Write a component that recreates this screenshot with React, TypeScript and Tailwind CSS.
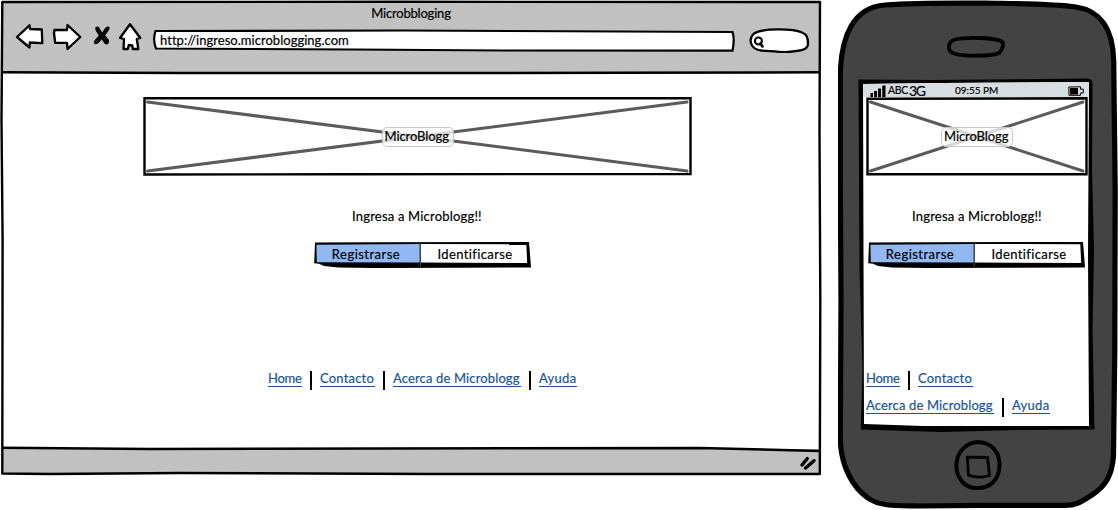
import React from "react";

const textBase = "font-['Lato',sans-serif] whitespace-nowrap text-black [-webkit-text-stroke:0.2px_black]";

function NavIcons() {
  return (
    <svg className="block shrink-0" width="130" height="32" viewBox="14 22 130 32" fill="white" stroke="black" strokeWidth="2.3" strokeLinejoin="round" strokeLinecap="round">
      <path d="M17 37 L29.5 25.3 L30.2 29 L41.8 29.5 L42.3 43.2 L29.8 42.5 L29.5 47.5 Z" />
      <path d="M80.3 37 L67.5 25 L67 30 L54.5 30 L54 33 L55.2 42.8 L67 42.8 L67.5 49 Z" />
      <g fill="black" stroke="none">
        <path d="M95.2 27.6 C97.5 25.8 99 26.5 100 29 L102.3 32.5 C104 29.5 105.5 27 107.5 26.6 C109.8 26.4 110.3 28 109 30 L105.2 35.5 L109 40 C109.5 42.5 108.2 44.8 106 44.6 C104 43.5 103 41 101.8 39.3 C100 41.5 98.2 44.3 95.5 44.2 C93.4 43.8 93.4 41.6 94.8 40 L98.8 35.6 C97 32.5 94.8 30.5 95.2 27.6 Z" />
      </g>
      <path d="M130 24.3 L140.3 38 L136.8 39 L138.3 49 L132.8 49 L132.3 45.5 L128.8 45 L127.8 49 L123.5 49 L124 39 L120 38 Z" />
    </svg>
  );
}

function Wordmark() {
  return (
    <div className="relative flex h-[20px] w-[72px] rounded-[5px] border border-[#c6c6c6] bg-white/75">
      <span className={`${textBase} pl-[2px] text-[13px] leading-[16px] tracking-[-0.08px]`}>MicroBlogg</span>
    </div>
  );
}

function BannerWide() {
  return (
    <div className="relative flex h-[79px] w-[549px] items-center justify-center bg-white">
      <svg className="absolute inset-0" width="549" height="79" viewBox="0 0 549 79" fill="none">
        <path d="M4.5 5 L544 74 M4.5 74 L544 5" stroke="#5b5b5b" strokeWidth="3" strokeLinecap="round" />
        <path d="M1.5 1.3 L547.5 1.3 L547.5 77 L200 77.3 L1.5 77.5 Z" stroke="black" strokeWidth="2.4" />
      </svg>
      <Wordmark />
    </div>
  );
}

function BannerNarrow() {
  return (
    <div className="relative flex h-[79px] w-[222px] items-center justify-center bg-white">
      <svg className="absolute inset-0" width="222" height="79" viewBox="0 0 222 79" fill="none">
        <path d="M4.5 5 L217 74 M4.5 74 L217 5" stroke="#5b5b5b" strokeWidth="3" strokeLinecap="round" />
        <path d="M1.5 1.8 L220.5 1.3 L220.5 77.2 L1.5 77.2 Z" stroke="black" strokeWidth="2.4" />
      </svg>
      <Wordmark />
    </div>
  );
}

function ButtonPair() {
  return (
    <div className="relative flex h-[26px] w-[217px] pt-[2px]">
      <svg className="absolute inset-0" width="217" height="26" viewBox="0 0 217 26">
        <path d="M1 0.4 L60 0.2 L215 0 L216 12 L217 25.5 L150 25.7 L60 25.9 L24 25.6 L10 24 L5 21.8 L0.2 21.3 Z" fill="black" />
        <path d="M2.4 2.8 L105.7 2 L105.7 20.5 L2.8 20.2 Z" fill="#92b8f2" />
        <path d="M106.8 2 L212.3 2.2 L213.2 21 L106.8 20.6 Z" fill="white" />
        <path d="M106.3 1 V25" stroke="#555" strokeWidth="0.8" />
      </svg>
      <button className={`${textBase} relative h-[20px] w-[106px] pr-[2px] text-[13px] leading-[20px] tracking-[0.48px]`}>Registrarse</button>
      <button className={`${textBase} relative h-[20px] w-[110px] text-[13px] leading-[20px] tracking-[0.38px]`}>Identificarse</button>
    </div>
  );
}

function Prompt() {
  return <p className={`${textBase} text-[13px] leading-[18px] tracking-[0.2px]`}>Ingresa a Microblogg!!</p>;
}

function Divider() {
  return <span className="ml-[8px] mr-[8px] h-[19px] w-[2px] bg-black" />;
}

const linkBase = "-mt-[3px] block h-[15px] border-b border-[#1b5598] font-['Lato',sans-serif] text-[13px] leading-[13px] whitespace-nowrap text-[#1b5598] [-webkit-text-stroke:0.2px_#1b5598]";
const Home = () => <a className={`${linkBase} w-[34px] tracking-[-0.25px]`}>Home</a>;
const Contacto = () => <a className={`${linkBase} w-[55px] tracking-[0.2px]`}>Contacto</a>;
const Acerca = () => <a className={`${linkBase} w-[128px] tracking-[0.14px]`}>Acerca de Microblogg</a>;
const Ayuda = () => <a className={`${linkBase} w-[38px] tracking-[0.3px]`}>Ayuda</a>;

function BrowserWindow() {
  return (
    <section className="relative flex h-[475px] w-[822px] shrink-0 flex-col pl-[2px] pr-[2px] pt-[2px]">
      <header className="flex h-[71px] flex-col bg-[#c1c1c1]">
        <h1 className={`${textBase} mt-[2px] text-center text-[13px] leading-[18px] tracking-[-0.2px]`}>Microbbloging</h1>
        <div className="flex pl-[12px]">
          <NavIcons />
          <div className="relative ml-[9px] mt-[7px] h-[23px] w-[582px]">
            <svg className="absolute inset-0" width="582" height="23" viewBox="0 0 582 23">
              <path d="M2.5 2 L250 1.5 L579.5 3 C581 7 581 14 579.5 21.7 L350 21.5 L200 20.5 L3 19.5 C0.8 14 0.8 7 2.5 2 Z" fill="white" stroke="black" strokeWidth="2.2" />
            </svg>
            <span className={`${textBase} relative block pl-[7px] pt-[3px] text-[13px] leading-[16px] tracking-[0.03px]`}>http://ingreso.microblogging.com</span>
          </div>
          <svg className="ml-[13px] mt-[5px] shrink-0" width="62" height="26" viewBox="748 27 62 26">
            <path d="M754 33.5 C763 28 793 28.5 802 32.5 C807 34.5 808 38 808 44 C808 50 800 51 788 52 C780 52.5 770 51 761 50.5 C750 49 748 39 754 33.5 Z" fill="white" stroke="black" strokeWidth="2.3" />
            <circle cx="758.4" cy="41" r="3.5" fill="none" stroke="black" strokeWidth="2.1" />
            <path d="M760.5 43.5 L762.5 46.5" stroke="black" strokeWidth="2.6" strokeLinecap="round" />
          </svg>
        </div>
      </header>
      <main className="flex h-[376px] flex-col bg-white pt-[24px]">
        <div className="ml-[141px]"><BannerWide /></div>
        <div className="mt-[31px] ml-[350px]"><Prompt /></div>
        <div className="mt-[17px] ml-[312px]"><ButtonPair /></div>
        <nav className="mt-[103px] ml-[266px] flex items-center">
          <Home /><Divider /><Contacto /><Divider /><Acerca /><Divider /><Ayuda />
        </nav>
      </main>
      <footer className="flex h-[24px] justify-end bg-[#c1c1c1]">
        <svg className="mr-[2px] mt-[6px]" width="20" height="16" viewBox="798 455 20 16" stroke="black" strokeWidth="3.4" strokeLinecap="round">
          <path d="M802 465 L807.3 458.5 M805.5 468 L814 460.7" />
        </svg>
      </footer>
      <svg className="pointer-events-none absolute inset-0" width="822" height="476" viewBox="0 0 822 476" fill="none" stroke="black">
        <path d="M2.3 2 L400 1.8 L820 2 L819.5 130 L820.3 300 L819.8 474 L430 474 L180 473 L50 474 L2.3 473.5 L2.6 240 L1.5 120 Z" strokeWidth="2.4" strokeLinejoin="round" />
        <path d="M2 72.3 L180 73 L430 73 L620 72.8 L820 72.3" strokeWidth="2.5" />
        <path d="M2 447.8 L150 449 L700 448 L820 451" strokeWidth="2.5" />
      </svg>
    </section>
  );
}

function StatusBar() {
  return (
    <div className="flex h-[15px] items-start bg-[#d7dee2] pl-[7px] pt-[1px]">
      <svg className="mt-[2px] shrink-0" width="17" height="13" viewBox="0 0 17 13" fill="black">
        <path d="M0.3 8 H3 V12 H0.6 Z M4 6 H7 V12 H4.2 Z M8 3.5 H11 V12 H8 Z M12.2 0.8 L15.5 0.3 V12 H12.2 Z" />
      </svg>
      <span className={`${textBase} ml-[1px] w-[21px] text-[10.5px] leading-[15px] tracking-[-0.3px]`}>ABC</span>
      <span className={`${textBase} w-[16px] text-[14px] leading-[15px] tracking-[-1.4px]`}>3G</span>
      <span className={`${textBase} ml-[30px] w-[45px] text-[10px] leading-[15px] tracking-[-0.05px]`}>09:55 PM</span>
      <svg className="ml-[68px] mt-[3px] shrink-0" width="17" height="11" viewBox="0 0 17 11" fill="none" stroke="black">
        <path d="M0.8 1 L12.5 0.8 V3.2 H15.3 V7 H12.5 V9.3 H1 Z" />
        <path d="M2 2 H10 V8.5 H2 Z" fill="black" stroke="none" />
      </svg>
    </div>
  );
}

function Phone() {
  return (
    <section className="relative ml-[16px] h-[510px] w-[280px] shrink-0 pt-[82px] pl-[25px]">
      <svg className="absolute inset-0" width="280" height="510" viewBox="838 0 280 510" stroke="black" fill="none">
        <path d="M840.3 75 C841 37 853 7 885 5 C920 2.5 950 3.2 985 3 C1015 3.6 1055 3.6 1076 7 C1102 11 1113 30 1113.7 61 L1115.2 190 L1115 260 L1114.8 350 L1113.5 456 C1112 475 1106 486 1092 495 C1081 502 1076 505.8 1063 505.3 L980 505.3 L920 506 C900 505.5 880 507 868 498 C852 487 841 465 840.3 440 L841 300 L840.3 180 Z" fill="#434343" strokeWidth="5.2" strokeLinejoin="round" />
        <path d="M955 39.5 C967 37 992 37.5 1001 41 C1005 43 1002.5 50 999 53 C992 56.5 963 56.5 954 53.5 C947 51 947 42 955 39.5 Z" strokeWidth="3.8" />
        <path d="M858.5 79.5 L930 80 L1087 78.6 C1091 79 1092.5 80 1092.5 85 L1092 170 L1094 250 L1092.5 330 L1094.5 429.5 L1020 430 L940 432 L860.8 429.5 L862.5 370 L859.5 270 Z" fill="black" stroke="none" />
        <path d="M977.5 442 C992 442 1000 453 999.5 466 C999 480 990 488.5 976 488 C963 487.5 955.5 476 956.5 463 C958 451 966 443 977.5 442 Z" strokeWidth="4" />
        <path d="M967.3 457.2 L987.5 457.5 L989.5 475.5 Q979 479 968.5 475.3 Z" strokeWidth="2.8" />
      </svg>
      <div className="relative h-[345px] w-[226px] bg-white [clip-path:polygon(0_2px,80px_1px,100%_0,225px_170px,226px_344px,60px_344px,1px_342px)]">
        <StatusBar />
        <div className="ml-[3px]"><BannerNarrow /></div>
        <div className="mt-[31px] ml-[49px]"><Prompt /></div>
        <div className="mt-[17px] ml-[5px]"><ButtonPair /></div>
        <nav className="mt-[103px] ml-[3px] flex items-center"><Home /><Divider /><Contacto /></nav>
        <nav className="mt-[8px] ml-[3px] flex items-center"><Acerca /><Divider /><Ayuda /></nav>
      </div>
    </section>
  );
}

export default function App() {
  return (
    <div className="flex h-[510px] w-[1118px] overflow-hidden bg-white">
      <BrowserWindow />
      <Phone />
    </div>
  );
}
